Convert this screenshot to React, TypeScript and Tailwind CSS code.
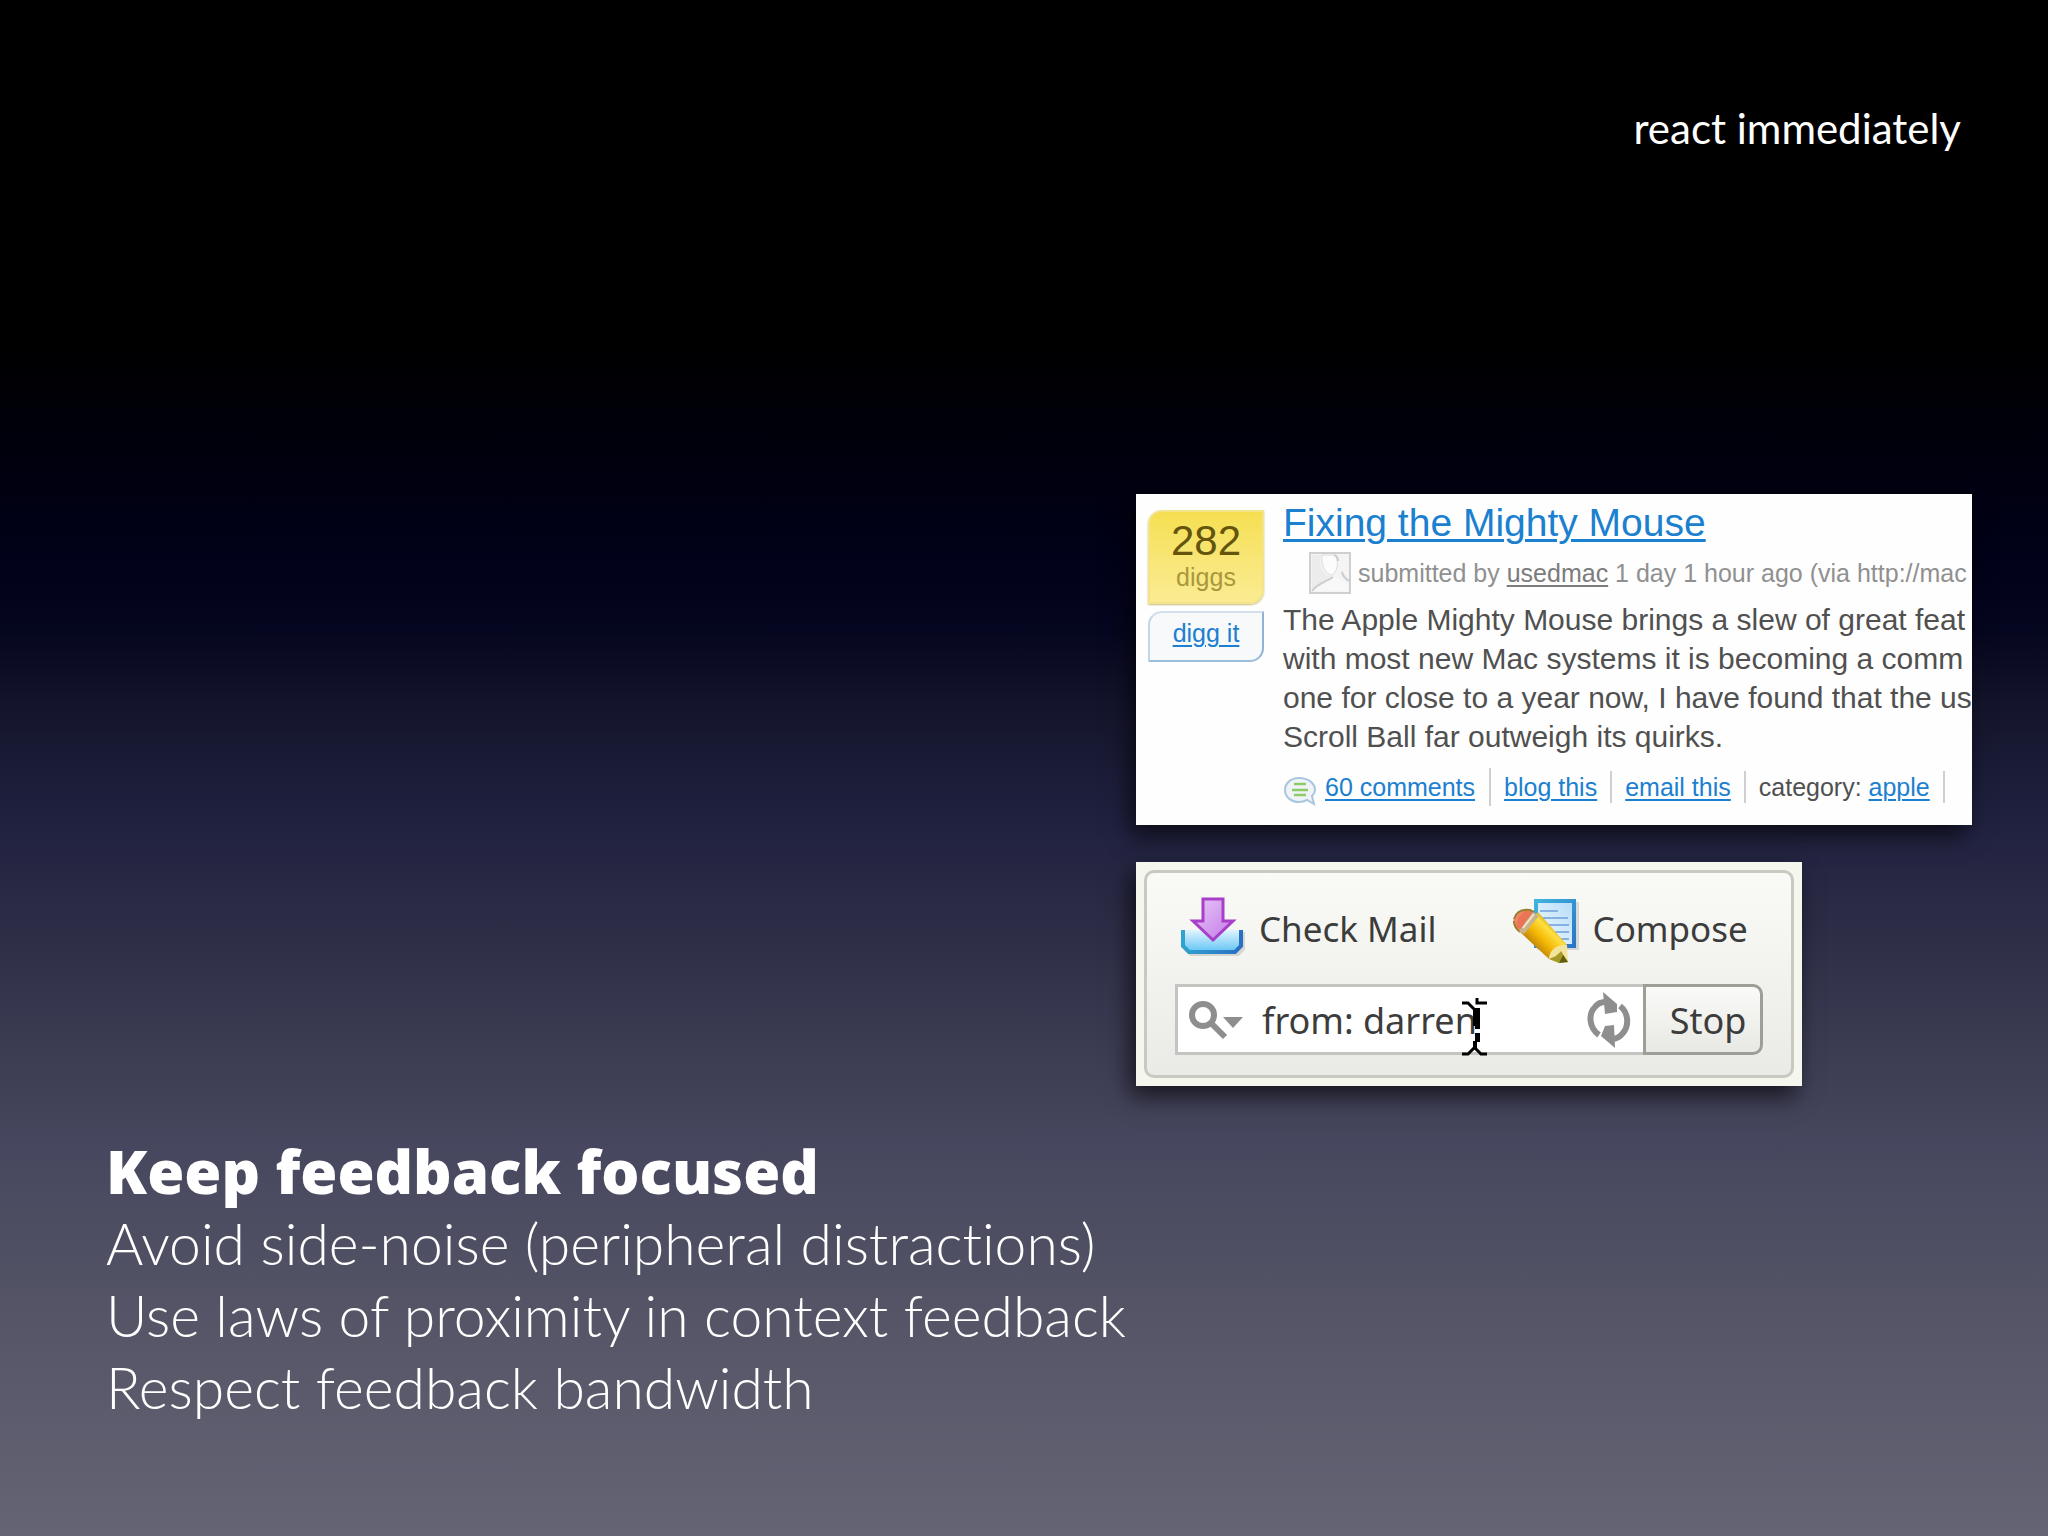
import React from "react";

const points = [
  "Avoid side-noise (peripheral distractions)",
  "Use laws of proximity in context feedback",
  "Respect feedback bandwidth",
];

function AvatarIcon() {
  return (
    <svg viewBox="0 0 42 42" className="size-[42px] shrink-0" aria-hidden="true">
      <rect x="1" y="1" width="40" height="40" fill="#f4f4f4" stroke="#cfcfcf" strokeWidth="2" />
      <path d="M3 3h9c-2 6 0 15 5 20l7 2c-5 5-13 6-21 14z" fill="#ececec" />
      <path d="M13 3h13c4 6 3 14-2 20-7 1-12-9-11-20z" fill="#fcfcfc" stroke="#dcdcdc" />
      <path d="M3 39c7-8 14-9 21-14 5 0 10 4 15 8v6z" fill="#f8f8f8" />
      <path d="M3 39c6-8 14-9 21-14M25 3c3 1 4 3 4 6M33 20c1 5 4 7 7 9" fill="none" stroke="#cdcdcd" strokeWidth="2" />
    </svg>
  );
}

function CommentIcon() {
  return (
    <svg viewBox="0 0 34 30" className="mt-[8px] h-[30px] w-[34px] shrink-0" aria-hidden="true">
      <path
        d="M16 2C8 2 2 7 2 14s6 12 14 12c3 0 6-1 8-2l7 4-2-8c2-2 3-4 3-6C32 7 25 2 16 2z"
        fill="#f0f3f7"
        stroke="#a9c6df"
        strokeWidth="2"
      />
      <path d="M11 8h12M9 14h16M11 19h12" stroke="#8ccc66" strokeWidth="2.4" />
    </svg>
  );
}

function InboxIcon() {
  return (
    <svg viewBox="0 0 66 60" className="mb-[6px] h-[60px] w-[66px] shrink-0" aria-hidden="true">
      <defs>
        <linearGradient id="tray" x1="0" y1="0" x2="0" y2="1">
          <stop offset="0" stopColor="#e0f4ff" />
          <stop offset="1" stopColor="#62c4f4" />
        </linearGradient>
        <linearGradient id="trayEdge" x1="0" y1="0" x2="1" y2="0">
          <stop offset="0" stopColor="#2fa3cf" />
          <stop offset="1" stopColor="#2a6fc4" />
        </linearGradient>
        <linearGradient id="arrow" x1="0" y1="0" x2="1" y2="1">
          <stop offset="0" stopColor="#e8c8f8" />
          <stop offset="1" stopColor="#c27ae8" />
        </linearGradient>
      </defs>
      <path d="M4 35v16l7 7h45l7-7V35" transform="translate(2 1)" fill="none" stroke="#000" strokeOpacity=".12" strokeWidth="4" />
      <path d="M3 34h60v16l-6 6H9l-6-6z" fill="url(#tray)" />
      <path d="M4 34v16l6 6h46l6-6V34" fill="none" stroke="url(#trayEdge)" strokeWidth="4" />
      <path d="M24 3h20v22h10L34 44 14 25h10z" fill="url(#arrow)" stroke="#a83fc8" strokeWidth="3" />
    </svg>
  );
}

function ComposeIcon() {
  return (
    <svg viewBox="0 0 66 66" className="mt-[4px] size-[66px] shrink-0" aria-hidden="true">
      <defs>
        <linearGradient id="page" x1="0" y1="1" x2="1" y2="0">
          <stop offset="0" stopColor="#f4fbff" />
          <stop offset="1" stopColor="#b4dcf8" />
        </linearGradient>
        <linearGradient id="pageEdge" x1="0" y1="0" x2="1" y2="1">
          <stop offset="0" stopColor="#3fb4dc" />
          <stop offset="1" stopColor="#2c74c8" />
        </linearGradient>
        <linearGradient id="pencil" x1="0" y1="1" x2="1" y2="0">
          <stop offset=".25" stopColor="#b87c08" />
          <stop offset=".45" stopColor="#f4b804" />
          <stop offset=".62" stopColor="#ffe040" />
          <stop offset=".75" stopColor="#c89010" />
        </linearGradient>
      </defs>
      <rect x="24" y="4" width="42" height="48" fill="#000" opacity=".12" />
      <rect x="23" y="3" width="38" height="45" fill="url(#page)" stroke="url(#pageEdge)" strokeWidth="4" />
      <path d="M27 13h18M27 20h28M30 27h26M38 34h18M44 41h12" stroke="#85b2e0" strokeWidth="2" />
      <path d="M7 34L25 14 54 47 36 61z" fill="url(#pencil)" />
      <path d="M54 47l1 17-9 1-10-4c0-9 8-15 18-14z" fill="#f2e49c" />
      <path d="M36 61c5-2 8-3 12-8l7 11-9 1z" fill="#a89a28" />
      <path d="M46 65l4-8 5 7z" fill="#5e6010" />
      <path d="M2 30c-5-9 2-18 12-18l6 2-13 20z" fill="#f08868" />
      <path d="M14 12l8 2-4 9-9 9-6-3C4 20 8 15 14 12z" fill="#ec7456" />
      <path d="M1 21c2-7 8-10 16-9l4 2M1 23c0 5 2 8 6 11" fill="none" stroke="#98802c" strokeWidth="2" />
      <path d="M6 33L20 14l6 4-15 18z" fill="#c8b48c" />
      <path d="M10 30L21 16" stroke="#efe4c8" strokeWidth="2" />
    </svg>
  );
}

function SearchIcon() {
  return (
    <svg viewBox="0 0 56 40" className="h-[40px] w-[56px]" aria-hidden="true">
      <circle cx="15" cy="15" r="11" fill="none" stroke="#8e8e8e" strokeWidth="6" />
      <path d="M23 23l14 14" stroke="#8e8e8e" strokeWidth="6" />
      <path d="M35 17h20L45 28z" fill="#8e8e8e" />
    </svg>
  );
}

function RefreshIcon() {
  return (
    <svg viewBox="0 0 44 56" className="h-[56px] w-[44px]" aria-hidden="true">
      <path d="M12 43C2 36 1 22 8 15c3-4 7-5 10-5" fill="none" stroke="#8e8e8e" strokeWidth="6" />
      <path d="M33 14c9 7 9 20 3 27-3 4-7 6-11 6" fill="none" stroke="#8e8e8e" strokeWidth="6" />
      <path d="M16 0l14 12v8l-12 2z" fill="#8e8e8e" />
      <path d="M28 56L14 44l4-10 9-1z" fill="#8e8e8e" />
    </svg>
  );
}

function TextCursor() {
  return (
    <svg viewBox="0 0 26 58" className="absolute left-[284px] top-[11px] h-[58px] w-[26px]" aria-hidden="true">
      <path d="M0 5h6l6 6M15 0v5h10M0 56h6l6-6M25 56h-6l-6-6" fill="none" stroke="#000" strokeWidth="3" />
      <path d="M11 10h7v21h-5v-3h-2zM13 35h5v9h-3v7h-4v-8h2z" fill="#000" />
    </svg>
  );
}

const storyLink = "text-[#1b80d0] underline decoration-2 underline-offset-3";

function StoryCard() {
  return (
    <article className="flex h-[331px] gap-[19px] overflow-hidden bg-[#fefefe] pl-3 font-['Liberation_Sans',sans-serif] shadow-[-6px_10px_22px_rgba(0,0,0,0.65)]">
      <div className="flex w-[116px] shrink-0 flex-col gap-[7px] pt-4">
        <div className="flex h-[94px] flex-col items-center rounded-tl-[14px] rounded-br-[14px] border-2 border-[#f3e48c] bg-linear-to-b from-[#f5df50] to-[#fbec92] pt-2 shadow-[0_1px_2px_#c8bc7c]">
          <span className="text-[42px] leading-[42px] text-[#64540c]">282</span>
          <span className="text-[25px] leading-[30px] text-[#a8983c]">diggs</span>
        </div>
        <div className="flex h-[51px] justify-center rounded-tl-[14px] rounded-br-[14px] border-2 border-t-[#d3dfea] border-r-[#8fb2d6] border-b-[#9dbddc] border-l-[#c3d6e8] bg-[#f7f9fb] pt-1">
          <a href="#digg" className={`text-[25px] leading-8 ${storyLink}`}>digg it</a>
        </div>
      </div>
      <div className="min-w-0 flex-1 whitespace-nowrap pt-1">
        <h2 className="text-[39px] leading-[50px]">
          <a href="#story" className="text-[#1b80d0] underline decoration-3 underline-offset-3">Fixing the Mighty Mouse</a>
        </h2>
        <p className="flex items-center gap-[7px] pl-[26px] text-[25px] leading-[50px] text-[#909090]">
          <AvatarIcon />
          <span>
            submitted by{" "}
            <a href="#usedmac" className="text-[#7c7c7c] underline decoration-2 underline-offset-3">usedmac</a>{" "}
            1 day 1 hour ago (via http://mac
          </span>
        </p>
        <p className="pt-[2px] text-[30px] leading-[39px] text-[#505050]">
          The Apple Mighty Mouse brings a slew of great feat
          <br />
          with most new Mac systems it is becoming a comm
          <br />
          one for close to a year now, I have found that the us
          <br />
          Scroll Ball far outweigh its quirks.
        </p>
        <ul className="flex items-center pt-3 text-[25px] leading-8 text-[#505050]">
          <li className="flex items-center gap-[8px] border-r-2 border-[#cfcfcf] pr-[14px]">
            <CommentIcon />
            <a href="#comments" className={storyLink}>60 comments</a>
          </li>
          <li className="border-r-2 border-[#cfcfcf] px-[13px]">
            <a href="#blog" className={storyLink}>blog this</a>
          </li>
          <li className="border-r-2 border-[#cfcfcf] px-[13px]">
            <a href="#email" className={storyLink}>email this</a>
          </li>
          <li className="border-r-2 border-[#cfcfcf] px-[13px]">
            category: <a href="#apple" className={storyLink}>apple</a>
          </li>
        </ul>
      </div>
    </article>
  );
}

function MailCard() {
  return (
    <section className="w-[666px] max-w-full bg-[#f5f6ee] p-2 font-['Noto_Sans',sans-serif] text-[#3c3c3c] shadow-[-6px_10px_22px_rgba(0,0,0,0.65)]">
      <div className="rounded-[10px] border-3 border-[#c9c9c0] bg-linear-to-b from-[#fafbf6] to-[#eaeae6] px-7 pt-5 pb-5">
        <div className="flex h-[72px] items-center gap-[76px] pl-1 text-[35px]">
          <button type="button" className="flex items-center gap-[14px] leading-[48px]">
            <InboxIcon />
            Check Mail
          </button>
          <button type="button" className="flex items-center gap-[14px] leading-[48px]">
            <ComposeIcon />
            Compose
          </button>
        </div>
        <form className="mt-[19px] flex text-[36px]" onSubmit={(e) => e.preventDefault()}>
          <div className="relative flex h-[71px] min-w-0 flex-1 items-center border-3 border-r-0 border-[#c4c4c0] bg-white pl-[10px]">
            <SearchIcon />
            <input
              aria-label="Search mail"
              defaultValue="from: darren"
              className="ml-[18px] min-w-0 flex-1 bg-transparent pt-[2px] outline-none"
            />
            <button type="button" aria-label="Refresh" className="mr-3">
              <RefreshIcon />
            </button>
            <TextCursor />
          </div>
          <button
            type="submit"
            className="h-[71px] w-[120px] rounded-r-[10px] border-3 border-[#9c9e98] bg-linear-to-b from-[#fafaf8] to-[#e8e8e4] pt-[2px] pl-[10px]"
          >
            Stop
          </button>
        </form>
      </div>
    </section>
  );
}

export default function App() {
  return (
    <main className="flex min-h-screen flex-col bg-[linear-gradient(to_bottom,#000_0%,#000_22%,#00000c_29%,#010119_36%,#05061f_41%,#14152c_46%,#212240_54%,#2c2c46_60%,#3b3b52_68%,#47475f_75%,#545466_85%,#646475_100%)] pr-[76px] pl-[106px] font-['Lato',sans-serif] text-white [font-variant-ligatures:none]">
      <header className="pt-[100px] pr-[11px] text-right text-[42px] leading-[56px]">react immediately</header>
      <div className="mt-[338px] grid grid-cols-[1030fr_836fr]">
        <div className="col-start-2 flex min-w-0 flex-col gap-[37px]">
          <StoryCard />
          <MailCard />
        </div>
      </div>
      <section className="mt-[49px] pb-20 text-[57px] leading-[72px]">
        <h1 className="font-['Open_Sans',sans-serif] text-[60px] font-extrabold">Keep feedback focused</h1>
        <ul className="font-light">
          {points.map((point) => (
            <li key={point}>{point}</li>
          ))}
        </ul>
      </section>
    </main>
  );
}
